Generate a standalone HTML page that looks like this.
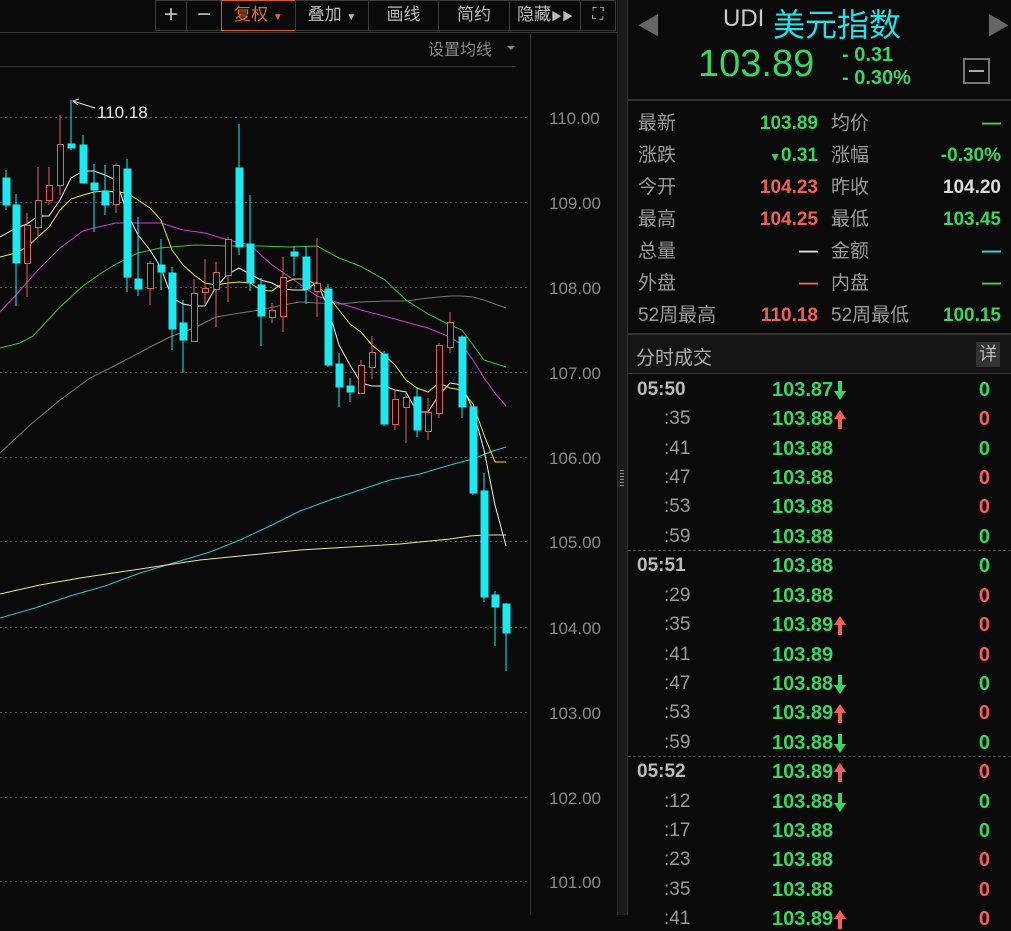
<!DOCTYPE html>
<html><head><meta charset="utf-8"><style>
*{margin:0;padding:0;box-sizing:border-box}
body{width:1011px;height:915px;background:#0a0a0a;position:relative;overflow:hidden;font-family:"Liberation Sans","Noto Sans CJK SC",sans-serif}
.a{position:absolute;white-space:nowrap}
.btn{position:absolute;top:0;height:31px;border:1px solid #3a3a3a;color:#bbb;font-size:17px;line-height:28px;text-align:center;background:#0a0a0a}
.lb,.lb2,.v1,.v2{position:absolute;font-size:19px;line-height:24px;height:24px}
.lb{left:638px;color:#9a9a9a}
.lb2{left:831px;color:#9a9a9a}
.v1{right:193px;font-weight:bold}
.v2{right:10px;font-weight:bold}
.g{color:#3cd462}.r{color:#f0605c}.w{color:#ddd}.c{color:#25e0e8}
.t,.ts,.p,.vol{position:absolute;line-height:24px;height:24px}
.t{font-size:19px;font-weight:bold;color:#bbb;left:637px}
.ts{font-size:19px;color:#9a9a9a;left:664px}
.p{left:772px;font-size:20px;font-weight:bold;color:#3cd462}
.vol{right:21px;font-size:20px;font-weight:bold}
.ar{display:inline-block;vertical-align:top;margin-left:1px;margin-top:2px}
</style></head><body>
<svg width="0" height="0" style="position:absolute"><defs>
<g id="dn"><rect x="4" y="1" width="4" height="12" fill="#3cd462"/><polygon points="0,11 12,11 6,20" fill="#3cd462"/></g>
<g id="up"><rect x="4" y="8" width="4" height="12" fill="#f0605c"/><polygon points="0,10 12,10 6,1" fill="#f0605c"/></g>
</defs></svg>
<svg class="a" style="left:0;top:0" width="617" height="915">
<g stroke="#555" stroke-dasharray="2,3" stroke-width="1">
<line x1="0" y1="117.5" x2="530" y2="117.5"/><line x1="0" y1="202.5" x2="530" y2="202.5"/><line x1="0" y1="287.5" x2="530" y2="287.5"/><line x1="0" y1="372.5" x2="530" y2="372.5"/><line x1="0" y1="457.5" x2="530" y2="457.5"/><line x1="0" y1="541.5" x2="530" y2="541.5"/><line x1="0" y1="627.5" x2="530" y2="627.5"/><line x1="0" y1="712.5" x2="530" y2="712.5"/><line x1="0" y1="797.5" x2="530" y2="797.5"/><line x1="0" y1="881.5" x2="530" y2="881.5"/>
</g>
<line x1="0" y1="32.5" x2="617" y2="32.5" stroke="#333"/>
<line x1="0" y1="66.5" x2="516" y2="66.5" stroke="#333"/>
<line x1="530.5" y1="34" x2="530.5" y2="915" stroke="#333"/>
<g fill="#8a8a8a" font-size="17" font-family="Liberation Sans,sans-serif">
<text x="549" y="124">110.00</text><text x="549" y="209">109.00</text><text x="549" y="294">108.00</text><text x="549" y="379">107.00</text><text x="549" y="464">106.00</text><text x="549" y="548">105.00</text><text x="549" y="634">104.00</text><text x="549" y="719">103.00</text><text x="549" y="804">102.00</text><text x="549" y="888">101.00</text>
</g>
<g fill="none" stroke-width="1">
<polyline stroke="#777" points="0,453 30,425 60,400 90,378 120,363 150,347 170,337 194,328 216,317 240,313 260,310 283,305 300,302 317,303 339,304 361,302 384,301 406,301 428,298 450,296 462,296 473,297 484,300 506,308"/>
<polyline stroke="#3bbfd0" points="0,618 35,608 70,596 105,586 140,573 180,561 210,552 240,540 270,526 300,511 330,500 360,490 390,480 420,474 450,465 473,459 490,452 506,447"/>
<polyline stroke="#e8e89a" points="0,594 40,585 80,578 120,572 160,566 200,560 250,555 300,550 350,547 400,544 450,539 470,536 484,535 506,535"/>
<polyline stroke="#3ec43e" points="0,348 20,343 33,336 60,307 83,286 100,274 116,264 138,253 160,248 195,245 230,246 260,246 290,247 317,246 339,258 360,266 385,280 406,300 428,314 450,325 462,330 473,345 484,360 506,367"/>
<polyline stroke="#d040d0" points="0,312 16,295 38,270 60,248 83,231 94,228 116,223 127,223 161,223 183,230 205,233 228,240 250,245 272,265 294,280 317,296 339,303 361,310 384,316 406,322 428,328 450,337 462,345 473,360 484,378 495,393 506,406"/>
<polyline stroke="#e8e840" points="0,257 16,253 27,247 38,237 49,227 60,210 71,199 83,195 94,192 105,191 116,192 127,193 138,200 150,208 161,220 172,250 183,265 194,275 205,283 216,285 228,283 239,282 250,283 261,290 272,291 283,283 294,279 306,279 317,285 328,296 339,310 350,324 361,332 372,345 384,355 395,365 406,380 417,388 428,392 439,383 450,388 462,390 473,404 484,435 495,462 506,462"/>
<polyline stroke="#eee" points="0,237 16,228 27,224 38,216 49,216 60,200 71,178 83,171 94,171 105,175 116,180 127,213 138,235 150,250 161,268 172,298 183,304 194,306 205,306 216,287 228,274 239,268 250,274 261,280 272,283 283,289 294,290 306,290 317,282 328,308 339,345 350,365 361,383 372,386 384,386 395,390 406,392 417,412 428,412 439,395 450,383 462,385 473,410 484,450 495,505 506,546"/>
</g>
<g stroke="#1ee8f0" fill="#1ee8f0">
<line x1="6" y1="170" x2="6" y2="210"/><rect x="3" y="178" width="7" height="27"/>
<line x1="16" y1="194" x2="16" y2="306"/><rect x="13" y="205" width="7" height="58"/>
<line x1="71" y1="100" x2="71" y2="150"/><rect x="68" y="144" width="7" height="4"/>
<line x1="83" y1="135" x2="83" y2="183"/><rect x="80" y="145" width="7" height="38"/>
<line x1="94" y1="164" x2="94" y2="232"/><rect x="91" y="183" width="7" height="7"/>
<line x1="105" y1="165" x2="105" y2="215"/><rect x="102" y="191" width="7" height="14"/>
<line x1="127" y1="159" x2="127" y2="292"/><rect x="124" y="169" width="7" height="108"/>
<line x1="138" y1="217" x2="138" y2="296"/><rect x="135" y="279" width="7" height="10"/>
<line x1="161" y1="239" x2="161" y2="290"/><rect x="158" y="265" width="7" height="7"/>
<line x1="172" y1="267" x2="172" y2="350"/><rect x="169" y="273" width="7" height="56"/>
<line x1="183" y1="300" x2="183" y2="373"/><rect x="180" y="323" width="7" height="17"/>
<line x1="239" y1="124" x2="239" y2="255"/><rect x="236" y="168" width="7" height="79"/>
<line x1="250" y1="195" x2="250" y2="291"/><rect x="247" y="244" width="7" height="39"/>
<line x1="261" y1="278" x2="261" y2="346"/><rect x="258" y="285" width="7" height="31"/>
<line x1="294" y1="246" x2="294" y2="276"/><rect x="291" y="252" width="7" height="4"/>
<line x1="306" y1="246" x2="306" y2="304"/><rect x="303" y="257" width="7" height="32"/>
<line x1="328" y1="284" x2="328" y2="367"/><rect x="325" y="289" width="7" height="76"/>
<line x1="339" y1="353" x2="339" y2="407"/><rect x="336" y="364" width="7" height="23"/>
<line x1="350" y1="378" x2="350" y2="402"/><rect x="347" y="386" width="7" height="6"/>
<line x1="384" y1="351" x2="384" y2="426"/><rect x="381" y="354" width="7" height="70"/>
<line x1="417" y1="387" x2="417" y2="437"/><rect x="414" y="397" width="7" height="33"/>
<line x1="462" y1="335" x2="462" y2="418"/><rect x="459" y="337" width="7" height="70"/>
<line x1="473" y1="407" x2="473" y2="495"/><rect x="470" y="407" width="7" height="86"/>
<line x1="484" y1="473" x2="484" y2="602"/><rect x="481" y="491" width="7" height="106"/>
<line x1="495" y1="591" x2="495" y2="646"/><rect x="492" y="595" width="7" height="12"/>
<line x1="506" y1="603" x2="506" y2="671"/><rect x="503" y="604" width="7" height="29"/>
</g>
<g stroke="#e0605a" fill="#0a0a0a">
<line x1="27" y1="213" x2="27" y2="297"/><rect x="24.5" y="225.5" width="6" height="38"/>
<line x1="38" y1="167" x2="38" y2="237"/><rect x="35.5" y="200.5" width="6" height="27"/>
<line x1="49" y1="167" x2="49" y2="205"/><rect x="46.5" y="185.5" width="6" height="15"/>
<line x1="60" y1="115" x2="60" y2="195"/><rect x="57.5" y="144.5" width="6" height="41"/>
<line x1="116" y1="163" x2="116" y2="213"/><rect x="113.5" y="165.5" width="6" height="39"/>
<line x1="150" y1="261" x2="150" y2="305"/><rect x="147.5" y="263.5" width="6" height="25"/>
<line x1="194" y1="279" x2="194" y2="342"/><rect x="191.5" y="293.5" width="6" height="48"/>
<line x1="205" y1="259" x2="205" y2="304"/><rect x="202.5" y="288.5" width="6" height="4"/>
<line x1="216" y1="262" x2="216" y2="327"/><rect x="213.5" y="272.5" width="6" height="17"/>
<line x1="228" y1="237" x2="228" y2="302"/><rect x="225.5" y="239.5" width="6" height="36"/>
<line x1="272" y1="303" x2="272" y2="323"/><rect x="269.5" y="310.5" width="6" height="7"/>
<line x1="283" y1="257" x2="283" y2="332"/><rect x="280.5" y="277.5" width="6" height="39"/>
<line x1="317" y1="238" x2="317" y2="317"/><rect x="314.5" y="283.5" width="6" height="8"/>
<line x1="361" y1="360" x2="361" y2="394"/><rect x="358.5" y="365.5" width="6" height="28"/>
<line x1="372" y1="336" x2="372" y2="379"/><rect x="369.5" y="352.5" width="6" height="15"/>
<line x1="395" y1="391" x2="395" y2="430"/><rect x="392.5" y="399.5" width="6" height="25"/>
<line x1="406" y1="391" x2="406" y2="443"/><rect x="403.5" y="397.5" width="6" height="10"/>
<line x1="428" y1="398" x2="428" y2="440"/><rect x="425.5" y="412.5" width="6" height="19"/>
<line x1="439" y1="343" x2="439" y2="418"/><rect x="436.5" y="345.5" width="6" height="68"/>
<line x1="450" y1="312" x2="450" y2="353"/><rect x="447.5" y="322.5" width="6" height="25"/>
</g>
<line x1="73" y1="101" x2="95" y2="108" stroke="#ddd"/><polyline points="79,99 73,101 78,105" fill="none" stroke="#ddd"/>
<text x="97" y="118" fill="#eee" font-size="17" font-family="Liberation Sans,sans-serif">110.18</text>
<text x="428" y="55" fill="#8a8a8a" font-size="16" font-family="Liberation Sans,Noto Sans CJK SC,sans-serif">设置均线</text>
<polygon points="507,46 515,46 511,50" fill="#8a8a8a"/>
</svg>
<div class="btn" style="left:155px;width:32px;font-size:24px">+</div>
<div class="btn" style="left:186px;width:36px;font-size:24px">−</div>
<div class="btn" style="left:221px;width:75px;border-color:#d06020;color:#e06a30">复权 <span style="font-size:10px">▼</span></div>
<div class="btn" style="left:295px;width:74px">叠加 <span style="font-size:10px">▼</span></div>
<div class="btn" style="left:368px;width:71px">画线</div>
<div class="btn" style="left:438px;width:72px">简约</div>
<div class="btn" style="left:509px;width:72px">隐藏<span style="font-size:11px">▶▶</span></div>
<div class="btn" style="left:580px;width:36px;font-size:16px">⛶</div>
<div class="a" style="left:617px;top:0;width:11px;height:915px;background:#1c1c1c;border-left:1px solid #2a2a2a;border-right:1px solid #333"></div>
<div class="a" style="left:620px;top:470px;width:4px;height:16px;background:repeating-linear-gradient(#888 0 1px,transparent 1px 3px)"></div>
<div class="a" style="left:637px;top:6px;font-size:24px;color:#666">◀</div>
<div class="a" style="left:986px;top:6px;font-size:24px;color:#666">▶</div>
<div class="a" style="left:723px;top:5px;font-size:24px;color:#ccc">UDI</div>
<div class="a c" style="left:773px;top:0px;font-size:32px">美元指数</div>
<div class="a g" style="left:698px;top:43px;font-size:38px">103.89</div>
<div class="a g" style="left:842px;top:44px;font-size:20px;font-weight:bold">- 0.31</div>
<div class="a g" style="left:842px;top:67px;font-size:20px;font-weight:bold">- 0.30%</div>
<div class="a" style="left:963px;top:58px;width:27px;height:26px;border:2px solid #777"><div style="margin:10px 4px 0;height:2px;background:#aaa"></div></div>
<div class="a" style="left:628px;top:99px;width:383px;height:2px;background:#333"></div>
<div class="lb" style="top:112px">最新</div><div class="v1 g" style="top:112px">103.89</div><div class="lb2" style="top:112px">均价</div><div class="v2 g" style="top:112px">—</div>
<div class="lb" style="top:144px">涨跌</div><div class="v1 g" style="top:144px"><span style="font-size:12px">▼</span>0.31</div><div class="lb2" style="top:144px">涨幅</div><div class="v2 g" style="top:144px">-0.30%</div>
<div class="lb" style="top:176px">今开</div><div class="v1 r" style="top:176px">104.23</div><div class="lb2" style="top:176px">昨收</div><div class="v2 w" style="top:176px">104.20</div>
<div class="lb" style="top:208px">最高</div><div class="v1 r" style="top:208px">104.25</div><div class="lb2" style="top:208px">最低</div><div class="v2 g" style="top:208px">103.45</div>
<div class="lb" style="top:240px">总量</div><div class="v1 w" style="top:240px">—</div><div class="lb2" style="top:240px">金额</div><div class="v2 c" style="top:240px">—</div>
<div class="lb" style="top:272px">外盘</div><div class="v1 r" style="top:272px">—</div><div class="lb2" style="top:272px">内盘</div><div class="v2 g" style="top:272px">—</div>
<div class="lb" style="top:304px">52周最高</div><div class="v1 r" style="top:304px">110.18</div><div class="lb2" style="top:304px">52周最低</div><div class="v2 g" style="top:304px">100.15</div>
<div class="a" style="left:628px;top:333px;width:383px;height:2px;background:#333"></div>
<div class="a" style="left:628px;top:335px;width:383px;height:38px;background:#141414"></div>
<div class="a" style="left:636px;top:343px;font-size:19px;color:#aaa">分时成交</div>
<div class="a" style="left:976px;top:342px;width:24px;height:25px;background:#333;color:#bbb;font-size:18px;text-align:center;line-height:25px">详</div>
<div class="a" style="left:628px;top:373px;width:383px;height:1px;background:#333"></div>
<div class="a" style="left:628px;top:550px;width:383px;border-top:1px dashed #444"></div>
<div class="a" style="left:628px;top:756px;width:383px;border-top:1px dashed #444"></div>

<div class="t" style="top:378px">05:50</div><div class="p" style="top:378px">103.87<svg class="ar" width="12" height="21"><use href="#dn"/></svg></div><div class="vol g" style="top:378px">0</div>
<div class="ts" style="top:407px">:35</div><div class="p" style="top:407px">103.88<svg class="ar" width="12" height="21"><use href="#up"/></svg></div><div class="vol r" style="top:407px">0</div>
<div class="ts" style="top:437px">:41</div><div class="p" style="top:437px">103.88</div><div class="vol g" style="top:437px">0</div>
<div class="ts" style="top:466px">:47</div><div class="p" style="top:466px">103.88</div><div class="vol r" style="top:466px">0</div>
<div class="ts" style="top:495px">:53</div><div class="p" style="top:495px">103.88</div><div class="vol r" style="top:495px">0</div>
<div class="ts" style="top:525px">:59</div><div class="p" style="top:525px">103.88</div><div class="vol g" style="top:525px">0</div>
<div class="t" style="top:554px">05:51</div><div class="p" style="top:554px">103.88</div><div class="vol g" style="top:554px">0</div>
<div class="ts" style="top:584px">:29</div><div class="p" style="top:584px">103.88</div><div class="vol r" style="top:584px">0</div>
<div class="ts" style="top:613px">:35</div><div class="p" style="top:613px">103.89<svg class="ar" width="12" height="21"><use href="#up"/></svg></div><div class="vol r" style="top:613px">0</div>
<div class="ts" style="top:643px">:41</div><div class="p" style="top:643px">103.89</div><div class="vol r" style="top:643px">0</div>
<div class="ts" style="top:672px">:47</div><div class="p" style="top:672px">103.88<svg class="ar" width="12" height="21"><use href="#dn"/></svg></div><div class="vol g" style="top:672px">0</div>
<div class="ts" style="top:701px">:53</div><div class="p" style="top:701px">103.89<svg class="ar" width="12" height="21"><use href="#up"/></svg></div><div class="vol r" style="top:701px">0</div>
<div class="ts" style="top:731px">:59</div><div class="p" style="top:731px">103.88<svg class="ar" width="12" height="21"><use href="#dn"/></svg></div><div class="vol g" style="top:731px">0</div>
<div class="t" style="top:760px">05:52</div><div class="p" style="top:760px">103.89<svg class="ar" width="12" height="21"><use href="#up"/></svg></div><div class="vol r" style="top:760px">0</div>
<div class="ts" style="top:790px">:12</div><div class="p" style="top:790px">103.88<svg class="ar" width="12" height="21"><use href="#dn"/></svg></div><div class="vol g" style="top:790px">0</div>
<div class="ts" style="top:819px">:17</div><div class="p" style="top:819px">103.88</div><div class="vol g" style="top:819px">0</div>
<div class="ts" style="top:848px">:23</div><div class="p" style="top:848px">103.88</div><div class="vol r" style="top:848px">0</div>
<div class="ts" style="top:878px">:35</div><div class="p" style="top:878px">103.88</div><div class="vol r" style="top:878px">0</div>
<div class="ts" style="top:907px">:41</div><div class="p" style="top:907px">103.89<svg class="ar" width="12" height="21"><use href="#up"/></svg></div><div class="vol r" style="top:907px">0</div>
</body></html>
